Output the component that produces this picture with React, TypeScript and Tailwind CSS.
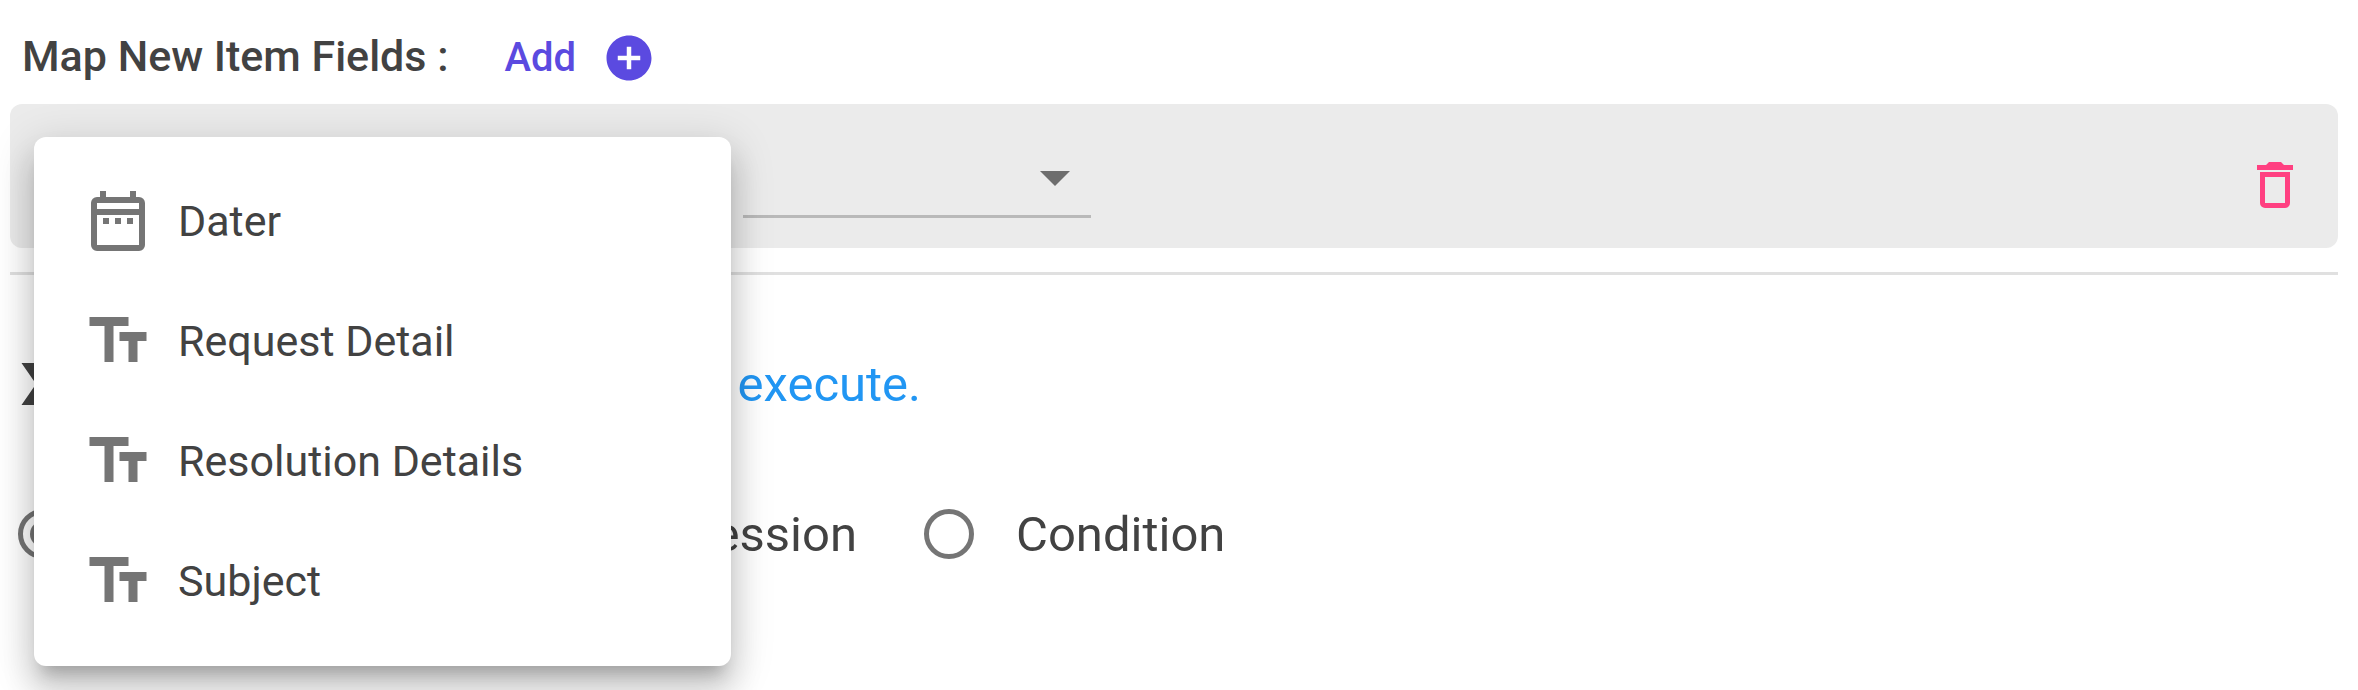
import { useState } from 'react'
import { MdAddCircle, MdLabelImportant, MdTextFields } from 'react-icons/md'

type FieldType = 'date' | 'text'

interface Field {
    label: string
    type: FieldType
}

const fields: Field[] = [
    { label: 'Dater', type: 'date' },
    { label: 'Request Detail', type: 'text' },
    { label: 'Resolution Details', type: 'text' },
    { label: 'Subject', type: 'text' },
]

function DateIcon() {
    return (
        <svg viewBox="0 0 24 24" className="size-[72px]" fill="currentColor" aria-hidden="true">
            <path
                fillRule="evenodd"
                d="M6 2h2v2h8V2h2v2h1a2 2 0 0 1 2 2v14a2 2 0 0 1-2 2H5a2 2 0 0 1-2-2V6a2 2 0 0 1 2-2h1V2zM5 6v2h14V6H5zm0 4v10h14V10H5z"
            />
            <path d="M7 11h2v2H7zM11 11h2v2h-2zM15 11h2v2h-2z" />
        </svg>
    )
}

function TrashIcon() {
    return (
        <svg viewBox="0 0 36 46" className="h-[46px] w-9" fill="currentColor" aria-hidden="true">
            <path d="M0 3h9l3-3h12l3 3h9v5H0z" />
            <path fillRule="evenodd" d="M3 10h30v31a5 5 0 0 1-5 5H8a5 5 0 0 1-5-5V10zm5 5v26h20V15H8z" />
        </svg>
    )
}

function SelectBox({ label }: { label: string }) {
    return (
        <div className="relative w-[348px]">
            <select
                aria-label={label}
                className="block h-[90px] w-full appearance-none border-b-3 border-[#b9b9b9] bg-transparent outline-none"
            />
            <svg
                viewBox="0 0 30 15"
                className="pointer-events-none absolute top-[43px] right-[21px] h-[15px] w-[30px] fill-[#6d6d6d]"
                aria-hidden="true"
            >
                <path d="M0 0h30L15 15z" />
            </svg>
        </div>
    )
}

interface RadioProps {
    label: string
    checked: boolean
    onSelect: () => void
}

function Radio({ label, checked, onSelect }: RadioProps) {
    return (
        <label className="flex items-center gap-[42px]">
            <input
                type="radio"
                name="run-mode"
                checked={checked}
                onChange={onSelect}
                className="size-[50px] appearance-none rounded-full border-5 border-[#757575] checked:bg-[#757575] checked:bg-clip-content checked:p-[7px]"
            />
            {label}
        </label>
    )
}

export default function App() {
    const [mode, setMode] = useState('Always')

    return (
        <main className="relative min-h-screen overflow-hidden bg-white pr-5 pl-[10px] font-['Roboto',sans-serif] text-[#424242]">
            <header className="flex h-[104px] items-center gap-14 pt-2 pl-3 text-[43px] font-medium">
                <h2>Map New Item Fields :</h2>
                <button type="button" className="flex items-center gap-[26px] pt-1 text-[40px] text-[#5b4ae0]">
                    Add
                    <MdAddCircle size={54} />
                </button>
            </header>

            <section className="flex h-36 items-start rounded-xl bg-[#ebebeb] pt-6 pr-[45px] pl-6">
                <div className="flex flex-1 gap-[361px]">
                    <SelectBox label="Item field" />
                    <SelectBox label="Value" />
                </div>
                <button type="button" aria-label="Delete" className="mt-[34px] text-[#ff4081]">
                    <TrashIcon />
                </button>
            </section>

            <hr className="mt-6 border-t-3 border-[#e0e0e0]" />

            <div className="mt-[73px] flex w-[911px] items-center justify-between pl-px text-[49px] leading-none">
                <MdLabelImportant size={72} />
                <p className="text-[#2196f3]">Select when to execute.</p>
            </div>

            <div className="mt-[89px] ml-2 flex gap-[67px] text-[49px] leading-none">
                <div className="flex w-[839px] justify-between">
                    <Radio label="Always" checked={mode === 'Always'} onSelect={() => setMode('Always')} />
                    <Radio label="Expression" checked={mode === 'Expression'} onSelect={() => setMode('Expression')} />
                </div>
                <Radio label="Condition" checked={mode === 'Condition'} onSelect={() => setMode('Condition')} />
            </div>

            <ul
                role="menu"
                className="absolute top-[137px] left-[34px] w-[697px] rounded-xl bg-white pt-6 pb-[25px] shadow-[0_15px_15px_-9px_rgba(0,0,0,0.2),0_24px_30px_3px_rgba(0,0,0,0.14),0_9px_42px_6px_rgba(0,0,0,0.12)]"
            >
                {fields.map((field) => (
                    <li key={field.label} role="none">
                        <button
                            type="button"
                            role="menuitem"
                            className="flex h-[120px] w-full items-center gap-6 px-12 text-[43px]"
                        >
                            <span className="text-[#757575]">
                                {field.type === 'date' ? <DateIcon /> : <MdTextFields size={72} />}
                            </span>
                            {field.label}
                        </button>
                    </li>
                ))}
            </ul>
        </main>
    )
}
